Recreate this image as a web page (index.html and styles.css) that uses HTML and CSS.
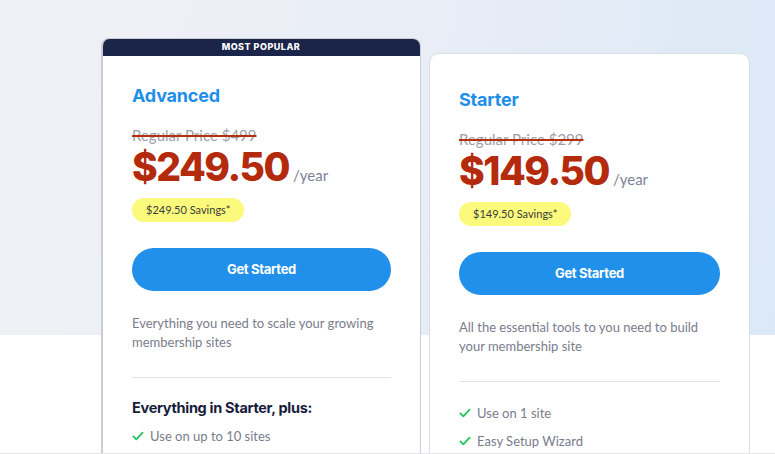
FILE: index.html
```html
<!DOCTYPE html>
<html lang="en">
<head>
<meta charset="utf-8">
<title>Pricing</title>
<link rel="stylesheet" href="styles.css">
</head>
<body>
<div class="page">
  <h1 class="page-title">Pick a Plan &amp; Level Up Big Today</h1>
  <div class="plans">
    <div class="card card-popular">
      <div class="ribbon">MOST POPULAR</div>
      <div class="card-body">
        <h2 class="plan-name">Advanced</h2>
        <div class="regular">Regular Price $499</div>
        <div class="price-row"><span class="price">$249.50</span><span class="per">/year</span></div>
        <div class="savings">$249.50 Savings*</div>
        <a class="btn" href="#">Get Started</a>
        <p class="desc">Everything you need to scale your growing membership sites</p>
        <hr class="divider">
        <h3 class="features-title">Everything in Starter, plus:</h3>
        <ul class="features">
          <li><svg class="check" viewBox="0 0 14 12"><path d="M1.5 6.5 L5 10 L12.5 2" fill="none" stroke="#22c55e" stroke-width="2.2" stroke-linecap="round" stroke-linejoin="round"/></svg>Use on up to 10 sites</li>
          <li><svg class="check" viewBox="0 0 14 12"><path d="M1.5 6.5 L5 10 L12.5 2" fill="none" stroke="#22c55e" stroke-width="2.2" stroke-linecap="round" stroke-linejoin="round"/></svg>Advanced Integrations</li>
        </ul>
      </div>
    </div>
    <div class="card card-plain">
      <div class="card-body">
        <h2 class="plan-name">Starter</h2>
        <div class="regular">Regular Price $299</div>
        <div class="price-row"><span class="price">$149.50</span><span class="per">/year</span></div>
        <div class="savings">$149.50 Savings*</div>
        <a class="btn" href="#">Get Started</a>
        <p class="desc">All the essential tools to you need to build your membership site</p>
        <hr class="divider">
        <ul class="features features-plain">
          <li><svg class="check" viewBox="0 0 14 12"><path d="M1.5 6.5 L5 10 L12.5 2" fill="none" stroke="#22c55e" stroke-width="2.2" stroke-linecap="round" stroke-linejoin="round"/></svg>Use on 1 site</li>
          <li><svg class="check" viewBox="0 0 14 12"><path d="M1.5 6.5 L5 10 L12.5 2" fill="none" stroke="#22c55e" stroke-width="2.2" stroke-linecap="round" stroke-linejoin="round"/></svg>Easy Setup Wizard</li>
          <li><svg class="check" viewBox="0 0 14 12"><path d="M1.5 6.5 L5 10 L12.5 2" fill="none" stroke="#22c55e" stroke-width="2.2" stroke-linecap="round" stroke-linejoin="round"/></svg>Unlimited Members</li>
        </ul>
      </div>
    </div>
  </div>
</div>
<div class="frame"></div>
</body>
</html>
```

FILE: styles.css
```css
* { box-sizing: border-box; }
html, body { margin: 0; padding: 0; }
body {
  font-family: Lato, "Liberation Sans", sans-serif;
  height: 454px;
  overflow: hidden;
  background: #fff;
}
.page {
  background:
    linear-gradient(to bottom, rgba(255,255,255,0) 335px, #fff 335px),
    linear-gradient(100deg, #f0f1f6 0%, #e8edf6 50%, #dae8f6 100%);
  min-height: 454px;
  overflow: hidden;
}
.page-title {
  margin: -49px 0 0 0;
  height: 50px;
  padding-left: 40px;
  text-align: center;
  font-family: Inter, "Liberation Sans", sans-serif;
  font-size: 42px;
  font-weight: 700;
  color: #1b2549;
  line-height: 50px;
  white-space: nowrap;
}
.plans {
  display: flex;
  align-items: flex-start;
  gap: 8px;
  padding-left: 101px;
  margin-top: 37px;
}
.card {
  background: #fff;
  overflow: hidden;
}
.card-popular {
  width: 320px;
  border: 1px solid #c9ccd3;
  border-left-width: 2px;
  border-radius: 8px 8px 0 0;
}
.card-plain {
  width: 321px;
  margin-top: 15px;
  border: 1px solid #d9dde4;
  border-radius: 10px 10px 0 0;
}
.ribbon {
  height: 18px;
  margin: -1px -1px 0 -2px;
  background: #1b2549;
  color: #fff;
  font-family: Inter, "Liberation Sans", sans-serif;
  font-weight: 800;
  font-size: 9px;
  letter-spacing: 0.5px;
  line-height: 18px;
  text-align: center;
}
.card-body {
  padding: 28px 29px 40px 29px;
}
.card-plain .card-body { padding: 34px 29px 40px 29px; }
.plan-name {
  margin: 0;
  font-family: Inter, "Liberation Sans", sans-serif;
  font-weight: 700;
  font-size: 18px;
  line-height: 24px;
  color: #1e8fe9;
  letter-spacing: -0.2px;
}
.regular {
  margin-top: 18px;
  font-size: 15px;
  line-height: 18px;
  color: #9e9ea7;
  text-decoration: line-through;
  text-decoration-color: #b5300f;
  text-decoration-thickness: 1.5px;
  display: inline-block;
}
.price-row {
  display: flex;
  align-items: baseline;
  gap: 4px;
  margin-top: 3px;
  height: 40px;
}
.price {
  font-family: Inter, "Liberation Sans", sans-serif;
  font-weight: 800;
  font-size: 39px;
  line-height: 40px;
  color: #b32a0c;
  letter-spacing: -1.5px;
}
.per {
  font-size: 15px;
  color: #7d8296;
}
.savings {
  display: inline-block;
  margin-top: 11px;
  height: 24px;
  padding: 0 14px;
  border-radius: 12px;
  background: #fbfa7c;
  color: #3b3b3b;
  font-size: 11px;
  line-height: 24px;
}
.btn {
  display: block;
  margin-top: 26px;
  height: 43px;
  border-radius: 22px;
  background: #2190ea;
  color: #fff;
  text-decoration: none;
  text-align: center;
  font-family: Inter, "Liberation Sans", sans-serif;
  font-weight: 700;
  font-size: 13px;
  letter-spacing: -0.3px;
  line-height: 43px;
}
.desc {
  margin: 23px 0 0 0;
  font-size: 13px;
  line-height: 19px;
  color: #7a7c8c;
}
.divider {
  margin: 25px 0 0 0;
  border: 0;
  border-top: 1px solid #e3e4e8;
  height: 0;
}
.features-title {
  margin: 21px 0 0 0;
  font-family: Inter, "Liberation Sans", sans-serif;
  font-weight: 700;
  font-size: 14.5px;
  line-height: 18px;
  letter-spacing: -0.3px;
  color: #161d3a;
}
.features {
  list-style: none;
  margin: 5px 0 0 0;
  padding: 0;
}
.features-plain { margin-top: 17px; }
.features li {
  display: flex;
  align-items: center;
  gap: 6px;
  height: 28px;
  font-size: 13px;
  color: #7a7c8c;
}
.check {
  width: 12px;
  height: 10px;
  flex: none;
}
.frame {
  position: fixed;
  left: 0; right: 0; bottom: 0;
  height: 1px;
  background: #e4e5e8;
}
```
